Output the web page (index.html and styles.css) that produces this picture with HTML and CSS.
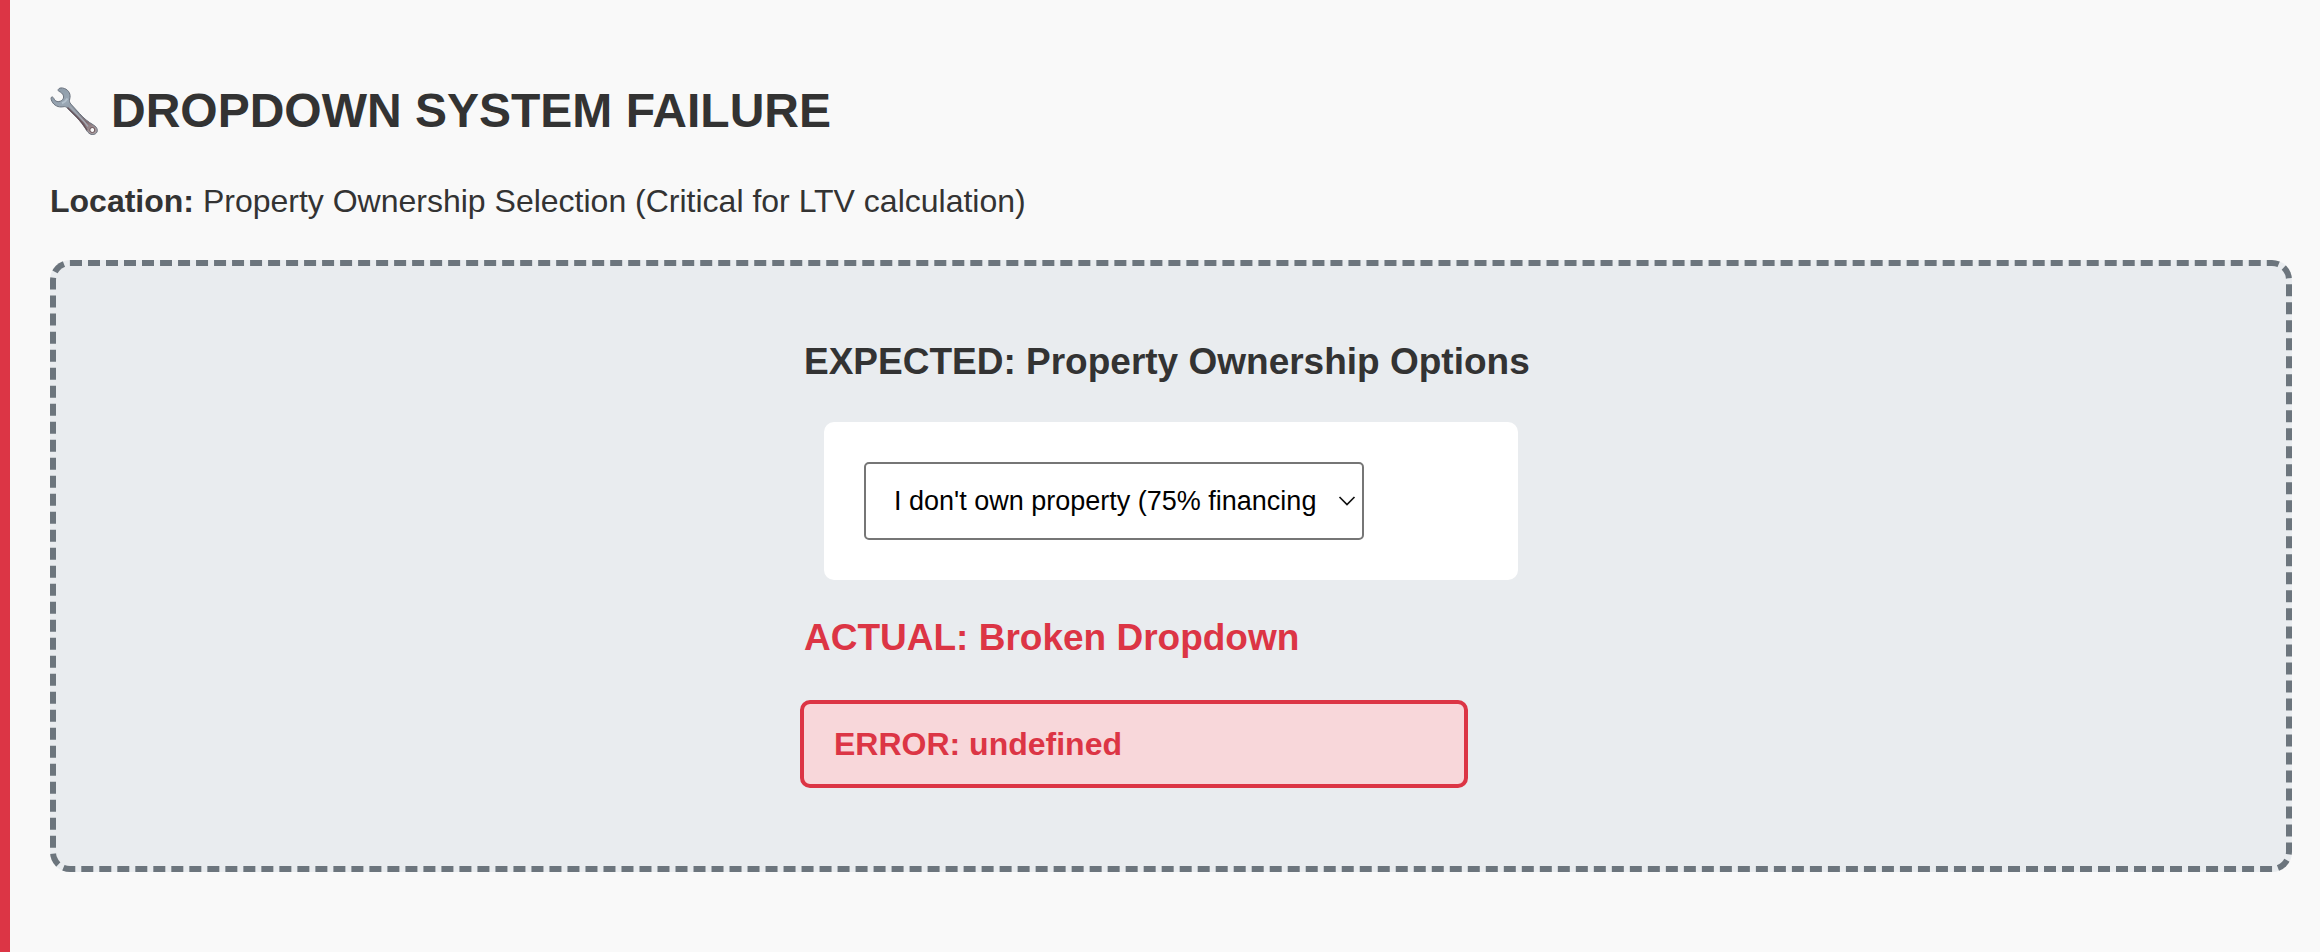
FILE: index.html
```html
<!DOCTYPE html>
<html lang="en">
<head>
<meta charset="utf-8">
<meta name="viewport" content="width=device-width, initial-scale=1">
<title>Dropdown System Failure</title>
<link rel="stylesheet" href="styles.css">
</head>
<body>
<main class="issue">
  <h1 class="issue-title">
    <svg class="wrench" viewBox="0 0 48 48" aria-hidden="true">
      <defs>
        <linearGradient id="steel" x1="8" y1="2" x2="40" y2="46" gradientUnits="userSpaceOnUse">
          <stop offset="0" stop-color="#8d9ba8"/>
          <stop offset=".3" stop-color="#9aa7b4"/>
          <stop offset=".55" stop-color="#858d98"/>
          <stop offset=".8" stop-color="#80696e"/>
          <stop offset="1" stop-color="#a79da0"/>
        </linearGradient>
      </defs>
      <path d="M8.200 2.600C9 .8 11.500 .4 14.500 1.500C19 3.200 21 7.500 19.700 12C19.300 14 19.400 15.400 20.800 17L29.500 26.500C34 31.500 38 34.800 43.500 38C47.800 40.600 48.500 44.600 45.500 46.700C42.600 48.600 39.300 47.300 37.200 44.300C33.700 38.500 31 34.800 26.500 30.300L17.200 21C16 19.700 15 19.300 12.900 19.800C8.500 20.600 4 18.500 2 14.500C.7 12 .7 10 2.100 9.900C2.900 9.900 3.500 10.800 4.300 12.300C5.600 14.700 8.200 15.300 10.800 14C13.700 12.500 14.400 9.700 12.600 7.100C11.300 5.300 9.700 4.800 8.700 4.200C8.200 3.800 8 3.200 8.200 2.600Z" fill="url(#steel)" stroke="#69717d" stroke-width="1"/>
      <path d="M17.500 11.500Q15.500 15 12 16.200" fill="none" stroke="#b3c0cc" stroke-width="2"/>
      <path d="M20 19.500L29 29Q34 34 38 39.500" fill="none" stroke="#a3a8b2" stroke-width="1.500"/>
      <path d="M17.500 20.500L27.500 30.500Q33.500 37 37 43" fill="none" stroke="#665259" stroke-width="1.400"/>
      <circle cx="42.300" cy="43" r="2.500" fill="#f9f9f9" stroke="#654d52" stroke-width="1"/>
    </svg>
    DROPDOWN SYSTEM FAILURE
  </h1>
  <p class="location"><strong>Location:</strong> Property Ownership Selection (Critical for LTV calculation)</p>
  <section class="demo">
    <div class="comparison">
      <h2 class="subtitle"><label for="ownership">EXPECTED: Property Ownership Options</label></h2>
      <div class="card">
        <div class="dropdown">
          <select class="dropdown-select" id="ownership">
            <option>I don't own property (75% financing</option>
          </select>
          <svg class="chevron" viewBox="0 0 18 12" aria-hidden="true"><path d="M1.500 2L9 9.500L16.500 2" fill="none" stroke="#111" stroke-width="1.700"/></svg>
        </div>
      </div>
      <h2 class="subtitle subtitle-error">ACTUAL: Broken Dropdown</h2>
      <div class="error" role="alert">ERROR: undefined</div>
    </div>
  </section>
</main>
</body>
</html>
```
FILE: styles.css
```css
* {
  box-sizing: border-box;
}

body {
  margin: 0;
  background: #f9f9f9;
  color: #333;
  font-family: "Liberation Sans", Arial, sans-serif;
  font-size: 32px;
  line-height: 38px;
}

h1, h2, p {
  margin: 0;
}

.issue {
  display: flex;
  flex-direction: column;
  gap: 40px;
  min-height: 100vh;
  padding: 80px 28px 80px 40px;
  border-left: 10px solid #dc3545;
}

.issue-title {
  display: flex;
  align-items: center;
  gap: 13px;
  font-size: 48px;
  line-height: 62px;
}

.wrench {
  flex: none;
  width: 48px;
  height: 48px;
}

.demo {
  display: flex;
  justify-content: center;
  padding: 74px 40px 78px;
  border: 6px dashed #6c757d;
  border-radius: 20px;
  background: #e9ecef;
}

.comparison {
  width: 742px;
  max-width: 100%;
}

.subtitle {
  padding: 0 4px;
  font-size: 37px;
  line-height: 44px;
}

.subtitle-error {
  color: #dc3545;
}

.card {
  margin: 38px 24px 36px;
  padding: 40px;
  border-radius: 10px;
  background: #fff;
}

.dropdown {
  display: grid;
  align-items: center;
  width: 500px;
  max-width: 100%;
}

.dropdown-select {
  grid-area: 1 / 1;
  width: 100%;
  height: 78px;
  padding: 0 40px 0 28px;
  border: 2px solid #767676;
  border-radius: 5px;
  background: #fff;
  color: #000;
  font-family: inherit;
  font-size: 27px;
  appearance: none;
}

.chevron {
  grid-area: 1 / 1;
  justify-self: end;
  width: 18px;
  height: 12px;
  margin-right: 8px;
  pointer-events: none;
}

.error {
  width: 90%;
  margin-top: 40px;
  padding: 20px 30px;
  border: 4px solid #dc3545;
  border-radius: 10px;
  background: #f8d7da;
  color: #dc3545;
  font-weight: bold;
  line-height: 40px;
}
```
